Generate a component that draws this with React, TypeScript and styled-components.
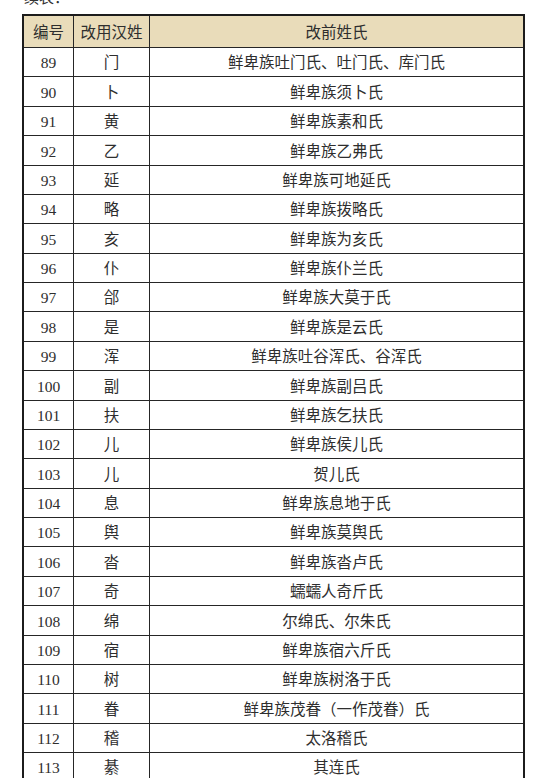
import React from "react";
import styled, { createGlobalStyle } from "styled-components";

const Global = createGlobalStyle`
  html, body { margin: 0; padding: 0; background: #ffffff; }
  body { width: 550px; height: 778px; overflow: hidden; }
`;

const Page = styled.div`
  width: 550px;
  height: 778px;
  overflow: hidden;
  background: #fff;
  padding-left: 22px;
  box-sizing: border-box;
  font-family: "Liberation Serif", "Noto Sans CJK SC", serif;
  color: #2e2e2e;
`;

const Caption = styled.div`
  height: 14px;
  font-size: 15px;
  line-height: 15px;
  margin-top: -11px;
  padding-left: 2px;
  color: #333;
  font-family: "Noto Sans CJK SC", sans-serif;
  margin-bottom: 11px;
`;

const Table = styled.div`
  width: 503px;
  box-sizing: border-box;
  border: 2px solid #1c1c1c;
  border-bottom: none;
`;

const Row = styled.div<{ $head?: boolean }>`
  display: grid;
  grid-template-columns: 50px 76px 1fr;
  height: ${(p) => (p.$head ? "31px" : "29.375px")};
  box-sizing: border-box;
  background: ${(p) => (p.$head ? "#e9dcba" : "#fff")};
  border-top: ${(p) => (p.$head ? "none" : "1.5px solid #262626")};
`;

const Cell = styled.div<{ $last?: boolean; $cjk?: boolean }>`
  display: flex;
  align-items: center;
  justify-content: center;
  font-size: 15.5px;
  line-height: 1;
  white-space: nowrap;
  border-right: ${(p) => (p.$last ? "none" : "1.5px solid #262626")};
  font-family: ${(p) =>
    p.$cjk
      ? `"Noto Sans CJK SC", sans-serif`
      : `"Liberation Serif", "Noto Sans CJK SC", serif`};
  font-weight: 400;
  padding-top: ${(p) => (p.$cjk ? "0" : "2px")};
`;

const rows: [string, string, string][] = [
  ["89", "门", "鲜卑族吐门氏、吐门氏、库门氏"],
  ["90", "卜", "鲜卑族须卜氏"],
  ["91", "黄", "鲜卑族素和氏"],
  ["92", "乙", "鲜卑族乙弗氏"],
  ["93", "延", "鲜卑族可地延氏"],
  ["94", "略", "鲜卑族拨略氏"],
  ["95", "亥", "鲜卑族为亥氏"],
  ["96", "仆", "鲜卑族仆兰氏"],
  ["97", "郃", "鲜卑族大莫于氏"],
  ["98", "是", "鲜卑族是云氏"],
  ["99", "浑", "鲜卑族吐谷浑氏、谷浑氏"],
  ["100", "副", "鲜卑族副吕氏"],
  ["101", "扶", "鲜卑族乞扶氏"],
  ["102", "儿", "鲜卑族侯儿氏"],
  ["103", "儿", "贺儿氏"],
  ["104", "息", "鲜卑族息地于氏"],
  ["105", "舆", "鲜卑族莫舆氏"],
  ["106", "沓", "鲜卑族沓卢氏"],
  ["107", "奇", "蠕蠕人奇斤氏"],
  ["108", "绵", "尔绵氏、尔朱氏"],
  ["109", "宿", "鲜卑族宿六斤氏"],
  ["110", "树", "鲜卑族树洛于氏"],
  ["111", "眷", "鲜卑族茂眷（一作茂眷）氏"],
  ["112", "稽", "太洛稽氏"],
  ["113", "綦", "其连氏"],
];

export default function App() {
  return (
    <>
      <Global />
      <Page>
        <Caption>续表：</Caption>
        <Table>
          <Row $head>
            <Cell $cjk>编号</Cell>
            <Cell $cjk>改用汉姓</Cell>
            <Cell $cjk $last>改前姓氏</Cell>
          </Row>
          {rows.map(([n, s, o]) => (
            <Row key={n}>
              <Cell>{n}</Cell>
              <Cell $cjk>{s}</Cell>
              <Cell $cjk $last>{o}</Cell>
            </Row>
          ))}
        </Table>
      </Page>
    </>
  );
}
